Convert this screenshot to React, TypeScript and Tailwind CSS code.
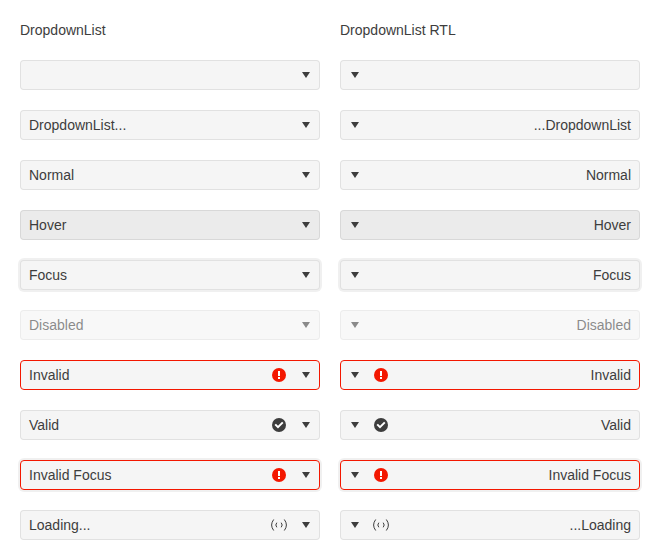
import React from "react";

type State = "normal" | "hover" | "focus" | "disabled" | "invalid" | "invalidFocus";
type Icon = "error" | "check" | "loading";
type Item = { text: string; rtlText?: string; state?: State; icon?: Icon };

const items: Item[] = [
  { text: "" },
  { text: "DropdownList...", rtlText: "...DropdownList" },
  { text: "Normal" },
  { text: "Hover", state: "hover" },
  { text: "Focus", state: "focus" },
  { text: "Disabled", state: "disabled" },
  { text: "Invalid", state: "invalid", icon: "error" },
  { text: "Valid", icon: "check" },
  { text: "Invalid Focus", state: "invalidFocus", icon: "error" },
  { text: "Loading...", rtlText: "...Loading", icon: "loading" },
];

const styles: Record<State, string> = {
  normal: "border-black/8 bg-[#f5f5f5]",
  hover: "border-black/8 bg-[#ebebeb]",
  focus: "border-black/8 bg-[#f5f5f5] shadow-[0_0_0_2px_rgba(0,0,0,0.06)]",
  disabled: "border-black/8 bg-[#f5f5f5] opacity-60",
  invalid: "border-[#f31700] bg-[#f5f5f5]",
  invalidFocus: "border-[#f31700] bg-[#f5f5f5] shadow-[0_0_0_2px_rgba(0,0,0,0.06)]",
};

function StatusIcon({ kind }: { kind: Icon }) {
  return (
    <svg viewBox="0 0 16 16" className={`size-4 ${kind === "error" ? "text-[#f31700]" : "text-[#3d3d3d]"}`} fill="currentColor">
      {kind === "error" && (
        <>
          <circle cx="8" cy="8" r="7" />
          <path d="M7 4h2v5H7ZM7 10h2v2H7Z" fill="#fff" />
        </>
      )}
      {kind === "check" && (
        <>
          <circle cx="8" cy="8" r="7" />
          <path d="M4.2 7.4l2.8 2.8 4.8-4.8" fill="none" stroke="#fff" strokeWidth="2" />
        </>
      )}
      {kind === "loading" && (
        <path d="M2.7 2.5Q-1.5 8 2.7 13.5M13.3 2.5Q17.5 8 13.3 13.5M5.8 5.7Q3.8 8 5.8 10.3M10.2 5.7Q12.2 8 10.2 10.3" fill="none" stroke="currentColor" />
      )}
    </svg>
  );
}

function Dropdown({ item, rtl }: { item: Item; rtl: boolean }) {
  return (
    <div className={`flex h-[30px] items-center rounded-[4px] border ${rtl ? "flex-row-reverse" : ""} ${styles[item.state ?? "normal"]}`}>
      <span className={`flex-1 px-2 ${rtl ? "text-right" : ""}`}>{rtl ? item.rtlText ?? item.text : item.text}</span>
      {item.icon && <span className={rtl ? "px-1" : "pl-1 pr-1.5"}><StatusIcon kind={item.icon} /></span>}
      <span className={`flex h-7 items-center justify-center ${rtl ? "w-7" : "w-[26px]"}`}>
        <svg viewBox="0 0 16 16" className="size-4" fill="currentColor"><path d="M4 5h8l-4 6Z" /></svg>
      </span>
    </div>
  );
}

function Column({ title, rtl = false }: { title: string; rtl?: boolean }) {
  return (
    <section className="flex w-[300px] flex-col gap-5">
      <h1 className="h-5">{title}</h1>
      {items.map((item) => <Dropdown key={item.text} item={item} rtl={rtl} />)}
    </section>
  );
}

export default function App() {
  return (
    <main className="flex h-[560px] gap-5 bg-white p-5 font-['Liberation_Sans',Arial,sans-serif] text-[14px] leading-5 text-[#3d3d3d]">
      <Column title="DropdownList" />
      <Column title="DropdownList RTL" rtl />
    </main>
  );
}
